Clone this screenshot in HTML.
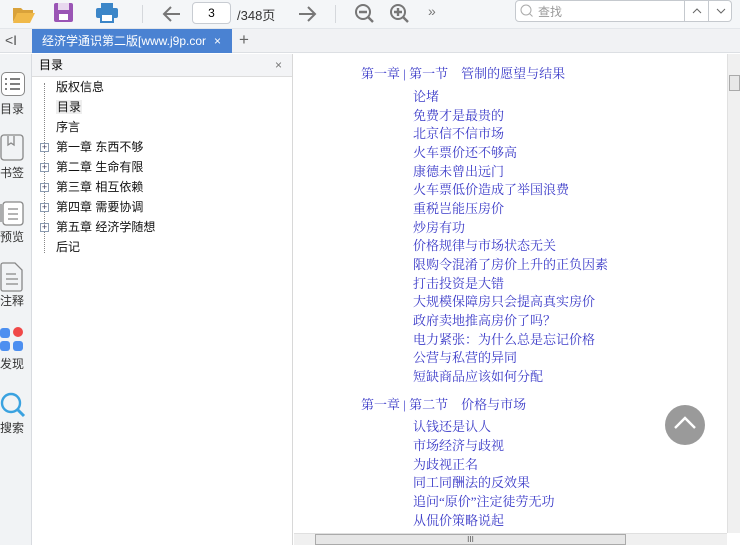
<!DOCTYPE html>
<html><head><meta charset="utf-8"><style>
*{margin:0;padding:0;box-sizing:border-box}
body{width:740px;height:545px;overflow:hidden;background:#fff;font-family:"Liberation Sans","Noto Sans CJK SC",sans-serif;position:relative}
.a{position:absolute}
#tb{left:0;top:0;width:740px;height:29px;background:#f4f6f8;border-bottom:1px solid #e3e6ea}
#tabs{left:0;top:29px;width:740px;height:24px;background:#f1f2f4;border-bottom:1px solid #dcdfe3}
#rail{left:0;top:54px;width:32px;height:491px;background:#f1f3f5;border-right:1px solid #d8dbe0}
#side{left:32px;top:54px;width:261px;height:491px;background:#fff;border-right:1px solid #d8d8d8}
.si{position:absolute;left:24px;font-size:12px;color:#111;line-height:14px}
.pl{position:absolute;left:8px;width:9px;height:9px;border:1px solid #8a9ab0;font-size:9px;line-height:7px;text-align:center;color:#335;background:#fff}
.c{position:absolute;font-family:"Liberation Serif","Noto Serif CJK SC",serif;font-size:13px;color:#3a3ac8;line-height:15px;white-space:nowrap}
.rl{position:absolute;left:0;width:32px;text-align:center;font-size:12px;color:#333}
</style></head><body>
<div id="tb" class="a">
 <svg class="a" style="left:12px;top:4px" width="24" height="20"><path d="M1 4h8l2 2h10v3H6L1 18z" fill="#d9a23a"/><path d="M5 9h18l-5 10H1z" fill="#f0b949"/></svg>
 <svg class="a" style="left:54px;top:3px" width="20" height="20"><rect x="0" y="0" width="19" height="19" rx="2" fill="#9a55b5"/><rect x="4" y="0" width="11" height="7" fill="#e8d8ef"/><rect x="5" y="11" width="9" height="6" fill="#fff"/></svg>
 <svg class="a" style="left:96px;top:3px" width="22" height="20"><rect x="5" y="0" width="12" height="5" fill="#3c86c8"/><rect x="0" y="5" width="22" height="10" rx="2" fill="#3c86c8"/><rect x="5" y="11" width="12" height="8" fill="#fff" stroke="#3c86c8" stroke-width="2"/></svg>
 <div class="a" style="left:142px;top:5px;width:1px;height:18px;background:#d5d8dc"></div>
 <svg class="a" style="left:162px;top:5px" width="20" height="18"><path d="M18 9H3M9 2L2 9l7 7" stroke="#777" stroke-width="2" fill="none"/></svg>
 <div class="a" style="left:192px;top:2px;width:39px;height:22px;border:1px solid #c8ccd2;border-radius:4px;background:#fff;font-size:12px;text-align:center;line-height:20px">3</div>
 <div class="a" style="left:237px;top:5px;font-size:13px;color:#333">/348页</div>
 <svg class="a" style="left:297px;top:5px" width="20" height="18"><path d="M2 9h15M11 2l7 7-7 7" stroke="#777" stroke-width="2" fill="none"/></svg>
 <div class="a" style="left:335px;top:5px;width:1px;height:18px;background:#d5d8dc"></div>
 <svg class="a" style="left:354px;top:3px" width="22" height="22"><circle cx="9" cy="9" r="7" stroke="#777" stroke-width="2" fill="none"/><path d="M5 9h8M14 14l5 5" stroke="#777" stroke-width="2.4"/></svg>
 <svg class="a" style="left:389px;top:3px" width="22" height="22"><circle cx="9" cy="9" r="7" stroke="#777" stroke-width="2" fill="none"/><path d="M5 9h8M9 5v8M14 14l5 5" stroke="#777" stroke-width="2.4"/></svg>
 <div class="a" style="left:428px;top:3px;font-size:14px;color:#777">»</div>
 <div class="a" style="left:515px;top:0;width:170px;height:22px;border:1px solid #c5c9ce;border-radius:4px 0 0 4px;background:#fff"></div>
 <svg class="a" style="left:520px;top:4px" width="14" height="14"><circle cx="6" cy="6" r="5" stroke="#aaa" fill="none"/><path d="M9.5 9.5l3 3" stroke="#aaa"/></svg>
 <div class="a" style="left:538px;top:3px;font-size:12px;color:#999">查找</div>
 <div class="a" style="left:685px;top:0;width:24px;height:22px;border:1px solid #c5c9ce;border-left:none;background:#fff"></div>
 <div class="a" style="left:709px;top:0;width:23px;height:22px;border:1px solid #c5c9ce;border-left:none;border-radius:0 4px 4px 0;background:#fff"></div>
 <svg class="a" style="left:692px;top:8px" width="10" height="6"><path d="M1 5l4-4 4 4" stroke="#666" fill="none"/></svg>
 <svg class="a" style="left:716px;top:8px" width="10" height="6"><path d="M1 1l4 4 4-4" stroke="#666" fill="none"/></svg>
</div>
<div id="tabs" class="a">
 <div class="a" style="left:5px;top:3px;font-size:14px;color:#555">&lt;I</div>
 <div class="a" style="left:32px;top:0;width:200px;height:24px;background:#4a82d2;color:#fff;font-size:12px;line-height:24px;padding-left:10px;white-space:nowrap;overflow:hidden">经济学通识第二版[www.j9p.cor<span class="a" style="left:182px;top:0">×</span></div>
 <div class="a" style="left:239px;top:1px;font-size:17px;color:#666">+</div>
</div>
<div id="rail" class="a">
 <div class="a" style="left:1px;top:18px;width:24px;height:24px;border:1px solid #888;border-radius:5px;background:#fff"></div>
 <svg class="a" style="left:4px;top:23px" width="18" height="14"><path d="M1 2h2M6 2h10M1 7h2M6 7h10M1 12h2M6 12h10" stroke="#555" stroke-width="1.5"/></svg>
 <div class="rl" style="top:46px;left:-4px">目录</div>
 <svg class="a" style="left:0;top:80px" width="24" height="28"><rect x="1" y="1" width="22" height="25" rx="3" stroke="#888" fill="none" stroke-width="1.3"/><path d="M8 2v9l3-2 3 2V2" stroke="#888" fill="none" stroke-width="1.3"/></svg>
 <div class="rl" style="top:110px;left:-4px">书签</div>
 <svg class="a" style="left:0;top:145px" width="24" height="28"><rect x="3" y="3" width="20" height="23" rx="3" stroke="#888" fill="#fff" stroke-width="1.3"/><path d="M1 5v18M8 10h10M8 15h10M8 20h10" stroke="#888" stroke-width="1.3"/></svg>
 <div class="rl" style="top:174px;left:-4px">预览</div>
 <svg class="a" style="left:0;top:208px" width="24" height="30"><path d="M3 1h12l7 7v19a2 2 0 0 1-2 2H3a2 2 0 0 1-2-2V3a2 2 0 0 1 2-2z" stroke="#888" fill="none" stroke-width="1.3"/><path d="M6 12h10M6 17h12M6 22h12" stroke="#888" stroke-width="1.3"/></svg>
 <div class="rl" style="top:238px;left:-4px">注释</div>
 <div class="a" style="left:0;top:274px;width:10px;height:10px;border-radius:3px;background:#4d8ff0"></div>
 <div class="a" style="left:13px;top:273px;width:10px;height:10px;border-radius:50%;background:#f04848"></div>
 <div class="a" style="left:0;top:287px;width:10px;height:10px;border-radius:3px;background:#4d8ff0"></div>
 <div class="a" style="left:13px;top:287px;width:10px;height:10px;border-radius:3px;background:#4d8ff0"></div>
 <div class="rl" style="top:301px;left:-4px">发现</div>
 <svg class="a" style="left:0;top:338px" width="26" height="26"><circle cx="11" cy="11" r="9" stroke="#3aa2e0" stroke-width="2.4" fill="none"/><path d="M18 18l6 6" stroke="#3aa2e0" stroke-width="3"/></svg>
 <div class="rl" style="top:365px;left:-4px">搜索</div>
</div>
<div id="side" class="a">
 <div class="a" style="left:0;top:0;width:260px;height:23px;background:#f3f4f6;border-bottom:1px solid #ddd;font-size:12px;line-height:22px;padding-left:7px">目录<span class="a" style="left:243px;top:0;color:#777">×</span></div>
 <div class="a" style="left:12px;top:29px;width:0;height:170px;border-left:1px dotted #888"></div>
 <div class="si" style="top:26px">版权信息</div>
 <div class="si" style="top:46px;background:#eee;padding:0 1px">目录</div>
 <div class="si" style="top:66px">序言</div>
 <div class="si" style="top:86px">第一章 东西不够</div>
 <div class="si" style="top:106px">第二章 生命有限</div>
 <div class="si" style="top:126px">第三章 相互依赖</div>
 <div class="si" style="top:146px">第四章 需要协调</div>
 <div class="si" style="top:166px">第五章 经济学随想</div>
 <div class="si" style="top:186px">后记</div>
 <div class="pl" style="top:89px">+</div><div class="pl" style="top:109px">+</div><div class="pl" style="top:129px">+</div><div class="pl" style="top:149px">+</div><div class="pl" style="top:169px">+</div>
</div>
<div class="c" style="left:361px;top:66px">第一章 | 第一节　管制的愿望与结果</div>
<div class="c" style="left:413px;top:88px;line-height:18.67px">论堵<br>免费才是最贵的<br>北京信不信市场<br>火车票价还不够高<br>康德未曾出远门<br>火车票低价造成了举国浪费<br>重税岂能压房价<br>炒房有功<br>价格规律与市场状态无关<br>限购令混淆了房价上升的正负因素<br>打击投资是大错<br>大规模保障房只会提高真实房价<br>政府卖地推高房价了吗？<br>电力紧张：为什么总是忘记价格<br>公营与私营的异同<br>短缺商品应该如何分配</div>
<div class="c" style="left:361px;top:397px">第一章 | 第二节　价格与市场</div>
<div class="c" style="left:413px;top:418px;line-height:18.8px">认钱还是认人<br>市场经济与歧视<br>为歧视正名<br>同工同酬法的反效果<br>追问“原价”注定徒劳无功<br>从侃价策略说起</div>
<div class="a" style="left:665px;top:405px;width:40px;height:40px;border-radius:50%;background:#9a9a9a"></div>
<svg class="a" style="left:673px;top:415px" width="24" height="16"><path d="M2 13L12 3l10 10" stroke="#fff" stroke-width="2.4" fill="none"/></svg>
<div class="a" style="left:727px;top:54px;width:13px;height:479px;background:#f0f0f0;border-left:1px solid #e0e0e0"></div>
<div class="a" style="left:729px;top:75px;width:11px;height:16px;background:#e8e8e8;border:1px solid #aaa"></div>
<div class="a" style="left:294px;top:533px;width:433px;height:12px;background:#f0f0f0;border-top:1px solid #e0e0e0"></div>
<div class="a" style="left:315px;top:534px;width:311px;height:11px;background:#e6e6e6;border:1px solid #aaa;font-size:8px;text-align:center;line-height:9px;color:#555">III</div>
</body></html>
